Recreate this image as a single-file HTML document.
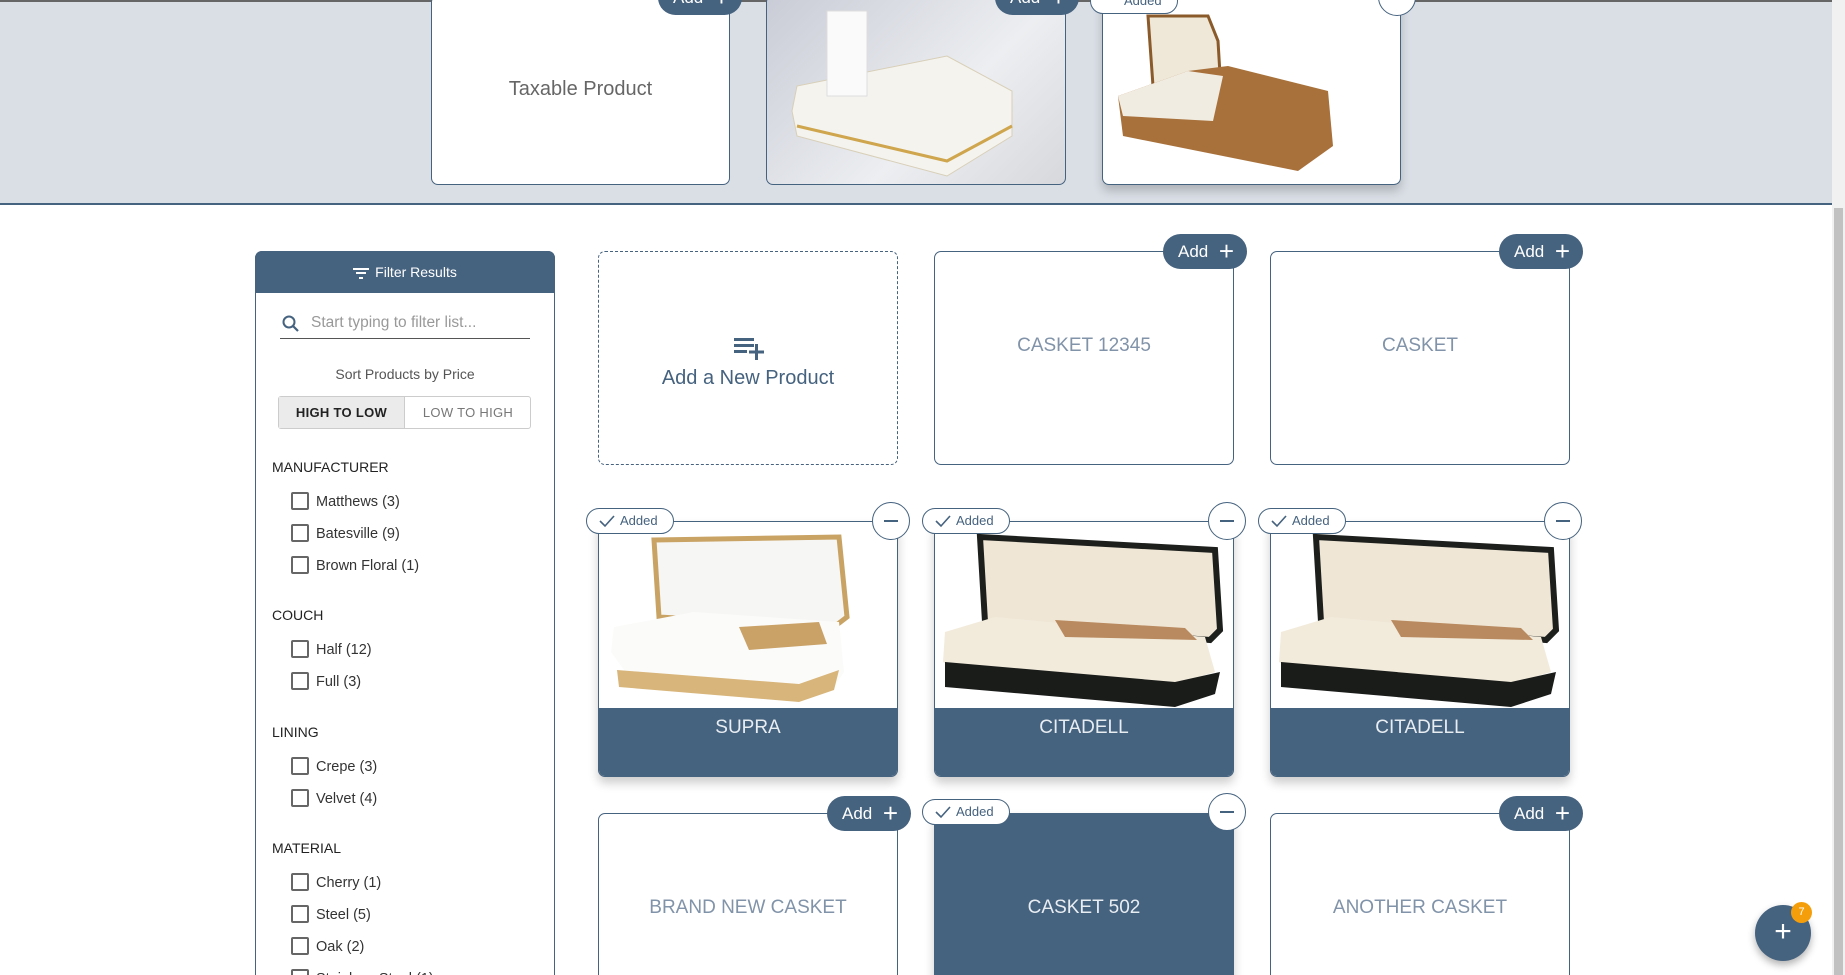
<!DOCTYPE html>
<html><head><meta charset="utf-8">
<style>
*{box-sizing:border-box;margin:0;padding:0}
html,body{width:1845px;height:975px;overflow:hidden;background:#fff}
body{font-family:"Liberation Sans",sans-serif}
#w{position:relative;width:1845px;height:975px;overflow:hidden}
.abs{position:absolute}
.top{left:0;top:0;width:1832px;height:205px;background:#dadfe6;border-bottom:2px solid #45627f;border-top:2px solid #666}
.card{position:absolute;border:1px solid #45627f;border-radius:7px;background:#fff}
.lbl{position:absolute;left:0;right:0;text-align:center;color:#8193a9;font-size:19px;font-weight:normal;letter-spacing:0}
.add{position:absolute;height:35px;width:84px;border-radius:18px;background:#45627f;color:#fff;font-size:17px;line-height:35px;padding-left:15px}
.add span{position:absolute;right:13px;top:0;font-size:26px;font-weight:300}
.added{position:absolute;height:26px;width:88px;border-radius:13px;border:1px solid #45627f;background:#fff;color:#45627f;font-size:13px;line-height:24px;padding-left:33px}
.added svg{position:absolute;left:12px;top:5px}
.minus{position:absolute;width:38px;height:38px;border-radius:50%;border:1px solid #45627f;background:#fff}
.minus:after{content:"";position:absolute;left:11px;top:17px;width:14px;height:2px;background:#45627f}
.chk{position:absolute;left:291px;width:18px;height:18px;border:2px solid #666;border-radius:2px}
.ct{position:absolute;left:316px;font-size:14.5px;color:#333}
.sec{position:absolute;left:272px;font-size:14px;color:#222}
.shadow{box-shadow:0 6px 10px rgba(0,0,0,.2)}
</style></head><body><div id="w">
<div class="abs top"></div>

<div class="card" style="left:431px;top:-5px;width:299px;height:190px"><div class="lbl" style="top:82px;color:#666;font-size:20px">Taxable Product</div></div>
<div class="add" style="left:658px;top:-20px">Add<span>+</span></div>
<div class="card" style="left:766px;top:-5px;width:300px;height:190px;overflow:hidden;background:linear-gradient(135deg,#c9ccd6,#eceef1 60%,#d6d8dc)">
<svg width="300" height="190" viewBox="0 0 300 190"><path d="M25 115 L30 90 L180 60 L245 95 L245 140 L180 180 L30 140Z" fill="#f4f3ee" stroke="#d8cfb8"/><rect x="60" y="15" width="40" height="85" fill="#fafafa" stroke="#ddd"/><path d="M30 130 L180 165 L245 130" stroke="#cfa54d" stroke-width="3" fill="none"/></svg></div>
<div class="add" style="left:995px;top:-20px">Add<span>+</span></div>
<div class="card shadow" style="left:1102px;top:-5px;width:299px;height:190px;overflow:hidden">
<svg width="299" height="190" viewBox="0 0 299 190"><path d="M45 20 L105 20 L115 45 L118 95 L50 90Z" fill="#efe8d8" stroke="#8a5a2a" stroke-width="3"/><path d="M15 100 L85 75 L125 70 L225 95 L230 150 L195 175 L20 140Z" fill="#a8703a"/><path d="M15 100 L85 75 L120 80 L110 125 L20 120Z" fill="#f1ece1"/></svg></div>
<div class="added" style="left:1090px;top:-12px">Added</div>
<div class="minus" style="left:1378px;top:-22px"></div>

<div class="abs" style="left:255px;top:251px;width:300px;height:740px;border:1px solid #45627f;border-radius:7px 7px 0 0"></div>
<div class="abs" style="left:255px;top:251px;width:300px;height:42px;background:#45627f;border-radius:7px 7px 0 0;color:#fff;font-size:14px;line-height:42px;text-align:center"><span style="display:inline-block;vertical-align:middle;margin-right:6px;width:16px;height:11px;position:relative"><i style="position:absolute;left:0;top:0;width:16px;height:2px;background:#fff"></i><i style="position:absolute;left:3px;top:4px;width:10px;height:2px;background:#fff"></i><i style="position:absolute;left:6px;top:9px;width:4px;height:2px;background:#fff"></i></span>Filter Results</div>
<svg class="abs" style="left:281px;top:314px" width="20" height="20" viewBox="0 0 20 20"><circle cx="8" cy="8" r="5.5" stroke="#45627f" stroke-width="2" fill="none"/><path d="M12 12 L17 17" stroke="#45627f" stroke-width="2.2"/></svg>
<div class="abs" style="left:311px;top:314px;font-size:15.5px;color:#999">Start typing to filter list...</div>
<div class="abs" style="left:280px;top:338px;width:250px;height:1px;background:#555"></div>
<div class="abs" style="left:255px;top:366px;width:300px;text-align:center;font-size:14px;color:#555">Sort Products by Price</div>
<div class="abs" style="left:278px;top:396px;width:253px;height:33px;border:1px solid #ccc;border-radius:3px;font-size:13px;font-weight:bold;letter-spacing:.3px;line-height:31px">
<div class="abs" style="left:0;top:0;width:126px;height:31px;background:#ebebeb;border-right:1px solid #ccc;text-align:center;color:#222">HIGH TO LOW</div>
<div class="abs" style="left:126px;top:0;width:126px;text-align:center;color:#777;font-weight:normal">LOW TO HIGH</div></div>

<div class="sec" style="top:459px">MANUFACTURER</div>
<div class="chk" style="top:492px"></div><div class="ct" style="top:494px">Matthews (3)</div>
<div class="chk" style="top:524px"></div><div class="ct" style="top:526px">Batesville (9)</div>
<div class="chk" style="top:556px"></div><div class="ct" style="top:558px">Brown Floral (1)</div>
<div class="sec" style="top:607px">COUCH</div>
<div class="chk" style="top:640px"></div><div class="ct" style="top:642px">Half (12)</div>
<div class="chk" style="top:672px"></div><div class="ct" style="top:674px">Full (3)</div>
<div class="sec" style="top:724px">LINING</div>
<div class="chk" style="top:757px"></div><div class="ct" style="top:759px">Crepe (3)</div>
<div class="chk" style="top:789px"></div><div class="ct" style="top:791px">Velvet (4)</div>
<div class="sec" style="top:840px">MATERIAL</div>
<div class="chk" style="top:873px"></div><div class="ct" style="top:875px">Cherry (1)</div>
<div class="chk" style="top:905px"></div><div class="ct" style="top:907px">Steel (5)</div>
<div class="chk" style="top:937px"></div><div class="ct" style="top:939px">Oak (2)</div>
<div class="chk" style="top:969px"></div><div class="ct" style="top:971px">Stainless Steel (1)</div>

<div class="card" style="left:598px;top:251px;width:300px;height:214px;border:1px dashed #45627f">
<svg class="abs" style="left:135px;top:86px" width="30" height="22" viewBox="0 0 30 22"><g fill="#45627f"><rect x="0" y="0" width="20" height="3"/><rect x="0" y="6" width="20" height="3"/><rect x="0" y="12" width="13" height="3"/><rect x="21" y="6" width="3" height="16"/><rect x="15" y="12.5" width="15" height="3"/></g></svg>
<div class="lbl" style="top:115px;color:#45627f;font-size:20px">Add a New Product</div></div>

<div class="card" style="left:934px;top:251px;width:300px;height:214px"><div class="lbl" style="top:83px">CASKET 12345</div></div>
<div class="add" style="left:1163px;top:234px">Add<span>+</span></div>
<div class="card" style="left:1270px;top:251px;width:300px;height:214px"><div class="lbl" style="top:83px">CASKET</div></div>
<div class="add" style="left:1499px;top:234px">Add<span>+</span></div>

<div class="card shadow" style="left:598px;top:521px;width:300px;height:256px;overflow:hidden">
<svg width="300" height="186" viewBox="0 0 300 186"><path d="M55 18 L240 15 L248 95 L235 105 L60 95Z" fill="#f6f6f4" stroke="#c9a364" stroke-width="5"/><path d="M15 105 L95 90 L240 100 L245 150 L235 165 L195 172 L30 155 L12 130Z" fill="#fbfbfa"/><path d="M140 105 L220 100 L228 122 L150 128Z" fill="#caa267"/><path d="M18 148 L200 162 L240 148 L235 168 L200 180 L20 165Z" fill="#d8b57a"/></svg>
<div class="abs" style="left:0;top:186px;width:300px;height:70px;background:#45627f"></div>
<div class="lbl" style="top:195px;color:#e8edf2">SUPRA</div></div>
<div class="added" style="left:586px;top:508px"><svg width="16" height="14" viewBox="0 0 16 14"><path d="M1 7 L6 12 L15 2" stroke="#45627f" stroke-width="1.6" fill="none"/></svg>Added</div>
<div class="minus" style="left:872px;top:502px"></div>

<div class="card shadow" style="left:934px;top:521px;width:300px;height:256px;overflow:hidden">
<svg width="300" height="186" viewBox="0 0 300 186"><path d="M45 15 L280 28 L285 108 L275 118 L50 100Z" fill="#efe6d6" stroke="#1c1f1c" stroke-width="6"/><path d="M10 110 L60 95 L270 115 L280 150 L240 162 L30 150 L8 140Z" fill="#f2ebdc"/><path d="M120 98 L250 106 L262 118 L130 115Z" fill="#b98a5f"/><path d="M10 140 L240 160 L285 150 L280 172 L240 185 L10 165Z" fill="#1a1c1a"/></svg>
<div class="abs" style="left:0;top:186px;width:300px;height:70px;background:#45627f"></div>
<div class="lbl" style="top:195px;color:#e8edf2">CITADELL</div></div>
<div class="added" style="left:922px;top:508px"><svg width="16" height="14" viewBox="0 0 16 14"><path d="M1 7 L6 12 L15 2" stroke="#45627f" stroke-width="1.6" fill="none"/></svg>Added</div>
<div class="minus" style="left:1208px;top:502px"></div>

<div class="card shadow" style="left:1270px;top:521px;width:300px;height:256px;overflow:hidden">
<svg width="300" height="186" viewBox="0 0 300 186"><path d="M45 15 L280 28 L285 108 L275 118 L50 100Z" fill="#efe6d6" stroke="#1c1f1c" stroke-width="6"/><path d="M10 110 L60 95 L270 115 L280 150 L240 162 L30 150 L8 140Z" fill="#f2ebdc"/><path d="M120 98 L250 106 L262 118 L130 115Z" fill="#b98a5f"/><path d="M10 140 L240 160 L285 150 L280 172 L240 185 L10 165Z" fill="#1a1c1a"/></svg>
<div class="abs" style="left:0;top:186px;width:300px;height:70px;background:#45627f"></div>
<div class="lbl" style="top:195px;color:#e8edf2">CITADELL</div></div>
<div class="added" style="left:1258px;top:508px"><svg width="16" height="14" viewBox="0 0 16 14"><path d="M1 7 L6 12 L15 2" stroke="#45627f" stroke-width="1.6" fill="none"/></svg>Added</div>
<div class="minus" style="left:1544px;top:502px"></div>

<div class="card" style="left:598px;top:813px;width:300px;height:200px"><div class="lbl" style="top:83px">BRAND NEW CASKET</div></div>
<div class="add" style="left:827px;top:796px">Add<span>+</span></div>
<div class="card shadow" style="left:934px;top:813px;width:300px;height:200px;background:#45627f"><div class="lbl" style="top:83px;color:#e8edf2">CASKET 502</div></div>
<div class="added" style="left:922px;top:799px"><svg width="16" height="14" viewBox="0 0 16 14"><path d="M1 7 L6 12 L15 2" stroke="#45627f" stroke-width="1.6" fill="none"/></svg>Added</div>
<div class="minus" style="left:1208px;top:793px"></div>
<div class="card" style="left:1270px;top:813px;width:300px;height:200px"><div class="lbl" style="top:83px">ANOTHER CASKET</div></div>
<div class="add" style="left:1499px;top:796px">Add<span>+</span></div>

<div class="abs" style="left:1755px;top:905px;width:56px;height:56px;border-radius:50%;background:#45627f;box-shadow:0 4px 8px rgba(0,0,0,.3);color:#fff;font-size:30px;font-weight:300;text-align:center;line-height:54px">+</div>
<div class="abs" style="left:1791px;top:902px;width:21px;height:21px;border-radius:50%;background:#f59e0b;color:#fff;font-size:11px;text-align:center;line-height:21px">7</div>

<div class="abs" style="left:1832px;top:0;width:13px;height:975px;background:#f1f1f1"></div>
<div class="abs" style="left:1834px;top:208px;width:9px;height:767px;background:#c1c1c1"></div>
</div></body></html>
